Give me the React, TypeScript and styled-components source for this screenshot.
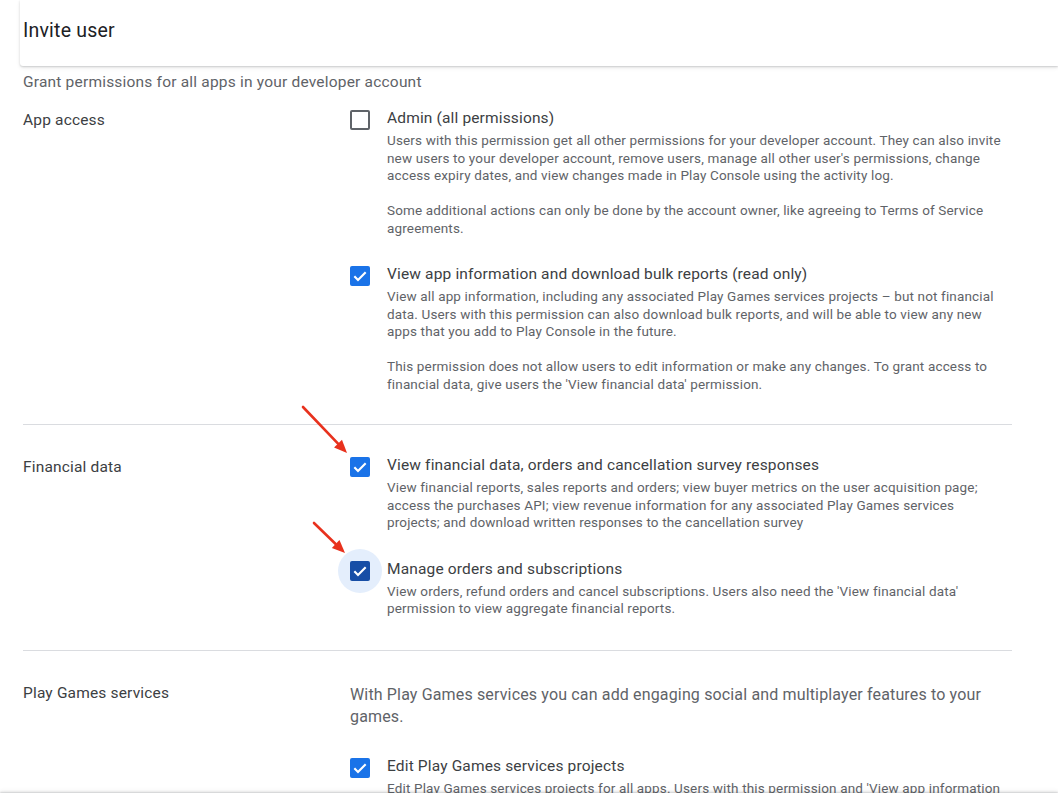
import React from "react";
import styled, { createGlobalStyle } from "styled-components";

const GlobalStyle = createGlobalStyle`
  html, body { margin: 0; padding: 0; background: #ffffff; }
  body { font-family: Roboto, "Noto Sans", Arial, sans-serif; -webkit-font-smoothing: antialiased; }
  * { box-sizing: border-box; }
`;

const Page = styled.div`
  position: relative;
  height: 796px;
  width: 1058px;
  display: flex;
  flex-direction: column;
  overflow: hidden;
  background: #fff;
`;

const Header = styled.header`
  flex-shrink: 0;
  position: relative;
  z-index: 2;
  margin-left: 20px;
  padding: 19px 0 23px 3px;
  background: #fff;
  border-bottom-left-radius: 3px;
  box-shadow: 0 1px 2px rgba(60, 64, 67, 0.22), 0 2px 4px rgba(60, 64, 67, 0.08);
`;

const Title = styled.h1`
  margin: 0;
  font-size: 19.5px;
  letter-spacing: 0.2px;
  line-height: 24px;
  font-weight: 400;
  color: #202124;
`;

const Content = styled.main`
  flex: 1;
  overflow: hidden;
  padding: 0 46px 0 23px;
`;

const Intro = styled.p`
  margin: 6px 0 0;
  font-size: 15.5px;
  letter-spacing: 0.2px;
  line-height: 20px;
  color: #5f6368;
`;

const Section = styled.section<{ $first?: boolean; $last?: boolean }>`
  display: grid;
  grid-template-columns: 327px 1fr;
  padding: ${(p) => (p.$first ? "16px 0 31px" : "30px 0 32px")};
  border-bottom: ${(p) => (p.$last ? "none" : "1px solid #dadce0")};
`;

const Label = styled.div`
  font-size: 15.5px;
  letter-spacing: 0.17px;
  line-height: 24px;
  color: #3c4043;
`;

const Items = styled.div`
  display: flex;
  flex-direction: column;
  gap: 27px;
`;

const SectionNote = styled.p`
  margin: 3px 0 28px;
  width: 640px;
  font-size: 16px;
  letter-spacing: 0.15px;
  line-height: 22px;
  color: #5f6368;
`;

const Item = styled.div`
  display: flex;
  gap: 17px;
  align-items: flex-start;
`;

const Box = styled.span<{ $checked?: boolean; $focused?: boolean }>`
  position: relative;
  flex-shrink: 0;
  width: 20px;
  height: 20px;
  margin-top: 2px;
  border-radius: 2px;
  display: flex;
  align-items: center;
  justify-content: center;
  border: ${(p) => (p.$checked ? "none" : "2px solid #5f6368")};
  background: ${(p) => (p.$checked ? (p.$focused ? "#174ea6" : "#1a73e8") : "#fff")};

  &::before {
    content: "";
    display: ${(p) => (p.$focused ? "block" : "none")};
    position: absolute;
    left: 50%;
    top: 50%;
    width: 44px;
    height: 44px;
    margin: -22px 0 0 -22px;
    border-radius: 50%;
    background: #e4eefc;
    z-index: -1;
  }
`;

const ItemText = styled.div`
  width: 621px;
`;

const ItemTitle = styled.div`
  font-size: 15.5px;
  letter-spacing: 0.15px;
  line-height: 20px;
  color: #3c4043;
  margin-bottom: 4px;
`;

const Desc = styled.p`
  margin: 0;
  font-size: 13.5px;
  letter-spacing: 0.15px;
  line-height: 17.5px;
  color: #5f6368;

  & + & {
    margin-top: 17.5px;
  }
`;

const BoxLayer = styled.span`
  position: relative;
  z-index: 0;
  display: flex;
`;

const Footer = styled.footer`
  flex-shrink: 0;
  height: 3px;
  position: relative;
  z-index: 2;
  background: #fff;
  box-shadow: 0 -1px 2px rgba(60, 64, 67, 0.22), 0 -2px 4px rgba(60, 64, 67, 0.08);
`;

const Annotations = styled.svg`
  position: absolute;
  left: 0;
  top: 0;
  width: 1058px;
  height: 796px;
  pointer-events: none;
  z-index: 3;
`;

const Check = () => (
  <svg width="16" height="16" viewBox="0 0 24 24">
    <path d="M3.5 12.5l5.5 5.5L20.5 6.5" fill="none" stroke="#fff" strokeWidth="3.2" />
  </svg>
);

type Perm = {
  title: string;
  desc: string[];
  checked?: boolean;
  focused?: boolean;
};

const Permission = ({ p }: { p: Perm }) => (
  <Item>
    <BoxLayer>
      <Box $checked={p.checked} $focused={p.focused}>
        {p.checked && <Check />}
      </Box>
    </BoxLayer>
    <ItemText>
      <ItemTitle>{p.title}</ItemTitle>
      {p.desc.map((d, i) => (
        <Desc key={i}>{d}</Desc>
      ))}
    </ItemText>
  </Item>
);

const appAccess: Perm[] = [
  {
    title: "Admin (all permissions)",
    desc: [
      "Users with this permission get all other permissions for your developer account. They can also invite new users to your developer account, remove users, manage all other user's permissions, change access expiry dates, and view changes made in Play Console using the activity log.",
      "Some additional actions can only be done by the account owner, like agreeing to Terms of Service agreements.",
    ],
  },
  {
    title: "View app information and download bulk reports (read only)",
    checked: true,
    desc: [
      "View all app information, including any associated Play Games services projects \u2013 but not financial data. Users with this permission can also download bulk reports, and will be able to view any new apps that you add to Play Console in the future.",
      "This permission does not allow users to edit information or make any changes. To grant access to financial data, give users the 'View financial data' permission.",
    ],
  },
];

const financial: Perm[] = [
  {
    title: "View financial data, orders and cancellation survey responses",
    checked: true,
    desc: [
      "View financial reports, sales reports and orders; view buyer metrics on the user acquisition page; access the purchases API; view revenue information for any associated Play Games services projects; and download written responses to the cancellation survey",
    ],
  },
  {
    title: "Manage orders and subscriptions",
    checked: true,
    focused: true,
    desc: [
      "View orders, refund orders and cancel subscriptions. Users also need the 'View financial data' permission to view aggregate financial reports.",
    ],
  },
];

const games: Perm[] = [
  {
    title: "Edit Play Games services projects",
    checked: true,
    desc: [
      "Edit Play Games services projects for all apps. Users with this permission and 'View app information and download bulk reports (read only)' can also view Play Games services projects.",
    ],
  },
];

const Arrow = ({ x1, y1, x2, y2 }: { x1: number; y1: number; x2: number; y2: number }) => {
  const a = Math.atan2(y2 - y1, x2 - x1);
  const len = 13;
  const w = 5.5;
  const bx = x2 - len * Math.cos(a);
  const by = y2 - len * Math.sin(a);
  const px = -Math.sin(a) * w;
  const py = Math.cos(a) * w;
  return (
    <g>
      <line x1={x1} y1={y1} x2={bx} y2={by} stroke="#e8311d" strokeWidth="2.6" strokeLinecap="round" />
      <polygon points={`${x2},${y2} ${bx + px},${by + py} ${bx - px},${by - py}`} fill="#e8311d" />
    </g>
  );
};

export default function App() {
  return (
    <>
      <GlobalStyle />
      <Page>
        <Header>
          <Title>Invite user</Title>
        </Header>
        <Content>
          <Intro>Grant permissions for all apps in your developer account</Intro>
          <Section $first>
            <Label>App access</Label>
            <Items>
              {appAccess.map((p) => (
                <Permission key={p.title} p={p} />
              ))}
            </Items>
          </Section>
          <Section>
            <Label>Financial data</Label>
            <Items>
              {financial.map((p) => (
                <Permission key={p.title} p={p} />
              ))}
            </Items>
          </Section>
          <Section $last>
            <Label>Play Games services</Label>
            <div>
              <SectionNote>
                With Play Games services you can add engaging social and multiplayer features to your games.
              </SectionNote>
              <Items>
                {games.map((p) => (
                  <Permission key={p.title} p={p} />
                ))}
              </Items>
            </div>
          </Section>
        </Content>
        <Footer />
        <Annotations viewBox="0 0 1058 796">
          <Arrow x1={303} y1={407} x2={347} y2={453} />
          <Arrow x1={314} y1={523} x2={345} y2={553} />
        </Annotations>
      </Page>
    </>
  );
}
